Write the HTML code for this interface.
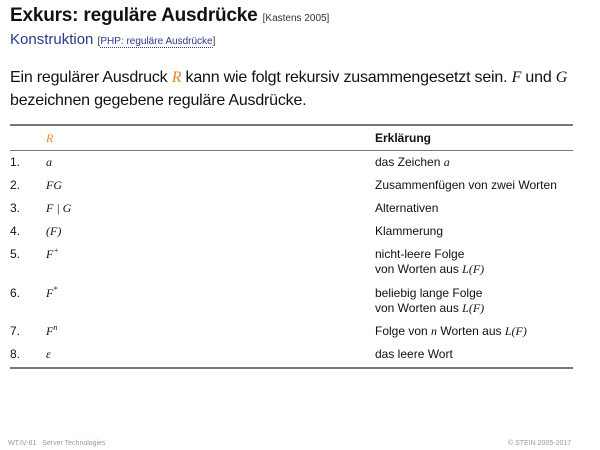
<!DOCTYPE html>
<html><head><meta charset="utf-8"><style>
body{margin:0;width:600px;height:450px;background:#fff;font-family:"Liberation Sans",sans-serif;color:#111;position:relative;overflow:hidden}
.a{position:absolute;white-space:nowrap;font-size:12px;line-height:14px}
.m{font-family:"Liberation Serif",serif;font-style:italic}
.s{position:relative;top:-5px;font-size:8px}
.line{position:absolute;left:10px;width:563px;background:#777}
</style></head><body>
<div class="a" style="left:10px;top:5px;font-size:19px;line-height:22px;font-weight:bold;letter-spacing:-0.2px">Exkurs: reguläre Ausdrücke <span style="font-size:10px;font-weight:normal;color:#333;letter-spacing:0">[Kastens 2005]</span></div>
<div class="a" style="left:10px;top:31px;font-size:15px;line-height:18px;color:#2b3a8c">Konstruktion <span style="font-size:10px;color:#333">[<span style="color:#2b3a8c;border-bottom:1px dotted #2b3a8c">PHP: reguläre Ausdrücke</span>]</span></div>
<div class="a" style="left:10px;top:66px;font-size:16px;line-height:23px;letter-spacing:-0.2px">Ein regulärer Ausdruck <span class="m" style="color:#e8872a">R</span> kann wie folgt rekursiv zusammengesetzt sein. <span class="m">F</span> und <span class="m">G</span><br>bezeichnen gegebene reguläre Ausdrücke.</div>
<div class="line" style="top:124px;height:2px"></div>
<div class="a m" style="left:46px;top:131px;color:#e8872a">R</div>
<div class="a" style="left:375px;top:131px;font-weight:bold">Erklärung</div>
<div class="line" style="top:150px;height:1px"></div>

<div class="a" style="left:10px;top:155px">1.</div><div class="a m" style="left:46px;top:155px">a</div><div class="a" style="left:375px;top:155px">das Zeichen <span class="m">a</span></div>
<div class="a" style="left:10px;top:178px">2.</div><div class="a m" style="left:46px;top:178px">FG</div><div class="a" style="left:375px;top:178px">Zusammenfügen von zwei Worten</div>
<div class="a" style="left:10px;top:201px">3.</div><div class="a m" style="left:46px;top:201px">F | G</div><div class="a" style="left:375px;top:201px">Alternativen</div>
<div class="a" style="left:10px;top:224px">4.</div><div class="a m" style="left:46px;top:224px">(F)</div><div class="a" style="left:375px;top:224px">Klammerung</div>
<div class="a" style="left:10px;top:247px">5.</div><div class="a m" style="left:46px;top:247px">F<span class="s">+</span></div><div class="a" style="left:375px;top:247px;line-height:15px">nicht-leere Folge<br>von Worten aus <span class="m">L(F)</span></div>
<div class="a" style="left:10px;top:286px">6.</div><div class="a m" style="left:46px;top:286px">F<span class="s">*</span></div><div class="a" style="left:375px;top:286px;line-height:15px">beliebig lange Folge<br>von Worten aus <span class="m">L(F)</span></div>
<div class="a" style="left:10px;top:324px">7.</div><div class="a m" style="left:46px;top:324px">F<span class="s">n</span></div><div class="a" style="left:375px;top:324px">Folge von <span class="m">n</span> Worten aus <span class="m">L(F)</span></div>
<div class="a" style="left:10px;top:347px">8.</div><div class="a m" style="left:46px;top:347px">ε</div><div class="a" style="left:375px;top:347px">das leere Wort</div>
<div class="line" style="top:367px;height:2px"></div>
<div class="a" style="left:8px;top:439px;font-size:7px;line-height:9px;color:#999">WT:IV-81 &nbsp;&nbsp;Server Technologies</div>
<div class="a" style="left:508px;top:439px;font-size:7px;line-height:9px;color:#999">© STEIN 2005-2017</div>
</body></html>
